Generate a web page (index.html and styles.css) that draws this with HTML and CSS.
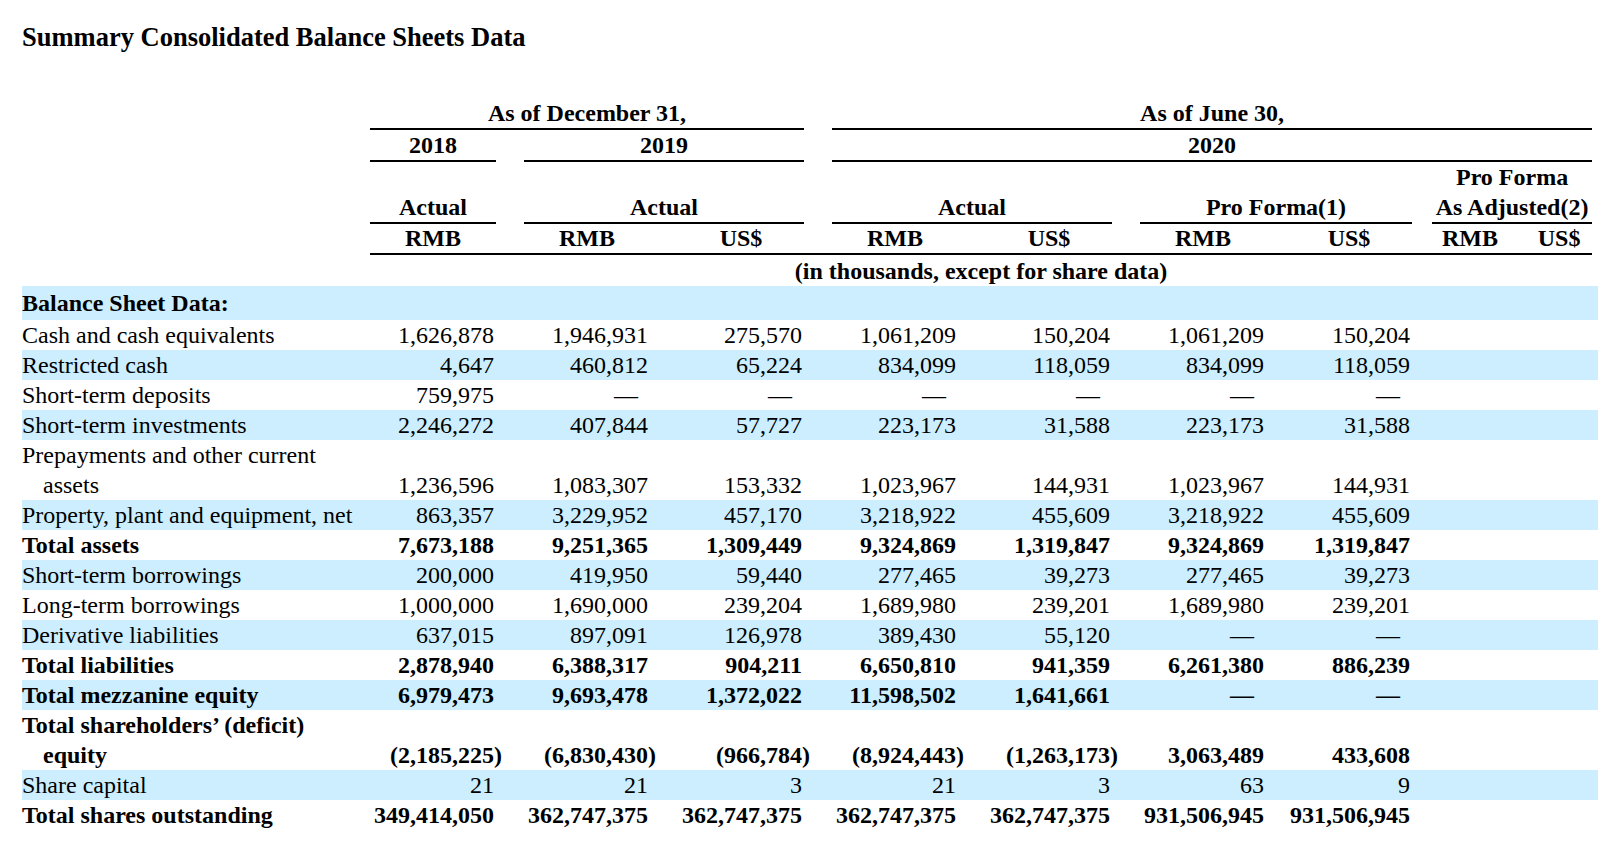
FILE: index.html
```html
<!DOCTYPE html>
<html lang="en">
<head>
<meta charset="utf-8">
<title>Summary Consolidated Balance Sheets Data</title>
<link rel="stylesheet" href="styles.css">
</head>
<body>
<h1 class="title">Summary Consolidated Balance Sheets Data</h1>
<table class="bs">
  <colgroup>
    <col class="w-lab"><col class="w-c1"><col class="w-c"><col class="w-c"><col class="w-c"><col class="w-c"><col class="w-c"><col class="w-c7"><col class="w-c8"><col class="w-c9"><col class="w-p">
  </colgroup>
  <thead>
    <tr>
      <td></td>
      <th colspan="3"><div class="ul">As of December 31,</div></th>
      <th colspan="6" class="g28"><div class="ul">As of June 30,</div></th>
      <td></td>
    </tr>
    <tr>
      <td></td>
      <th><div class="ul">2018</div></th>
      <th colspan="2" class="g28"><div class="ul">2019</div></th>
      <th colspan="6" class="g28"><div class="ul">2020</div></th>
      <td></td>
    </tr>
    <tr>
      <td></td>
      <td colspan="7"></td>
      <th colspan="2" class="g20">Pro Forma</th>
      <td></td>
    </tr>
    <tr>
      <td></td>
      <th><div class="ul">Actual</div></th>
      <th colspan="2" class="g28"><div class="ul">Actual</div></th>
      <th colspan="2" class="g28"><div class="ul">Actual</div></th>
      <th colspan="2" class="g28"><div class="ul">Pro Forma(1)</div></th>
      <th colspan="2" class="g20"><div class="ul">As Adjusted(2)</div></th>
      <td></td>
    </tr>
    <tr class="units">
      <td></td>
      <th class="unit">RMB</th>
      <th class="unit g28">RMB</th>
      <th class="unit g28">US$</th>
      <th class="unit g28">RMB</th>
      <th class="unit g28">US$</th>
      <th class="unit g28">RMB</th>
      <th class="unit g20">US$</th>
      <th class="unit g20">RMB</th>
      <th class="unit g18">US$</th>
      <td></td>
    </tr>
    <tr>
      <td></td>
      <th colspan="9" class="note">(in thousands, except for share data)</th>
      <td></td>
    </tr>
  </thead>
  <tbody>
    <tr class="alt sec">
      <td class="lab bold">Balance Sheet Data:</td>
      <td></td><td></td><td></td><td></td><td></td><td></td><td></td><td></td><td></td><td></td>
    </tr>
    <tr>
      <td class="lab">Cash and cash equivalents</td>
      <td>1,626,878</td><td>1,946,931</td><td>275,570</td><td>1,061,209</td><td>150,204</td><td>1,061,209</td><td>150,204</td><td></td><td></td><td></td>
    </tr>
    <tr class="alt">
      <td class="lab">Restricted cash</td>
      <td>4,647</td><td>460,812</td><td>65,224</td><td>834,099</td><td>118,059</td><td>834,099</td><td>118,059</td><td></td><td></td><td></td>
    </tr>
    <tr>
      <td class="lab">Short-term deposits</td>
      <td>759,975</td><td><span class="dash">—</span></td><td><span class="dash">—</span></td><td><span class="dash">—</span></td><td><span class="dash">—</span></td><td><span class="dash">—</span></td><td><span class="dash">—</span></td><td></td><td></td><td></td>
    </tr>
    <tr class="alt">
      <td class="lab">Short-term investments</td>
      <td>2,246,272</td><td>407,844</td><td>57,727</td><td>223,173</td><td>31,588</td><td>223,173</td><td>31,588</td><td></td><td></td><td></td>
    </tr>
    <tr>
      <td class="lab">Prepayments and other current assets</td>
      <td>1,236,596</td><td>1,083,307</td><td>153,332</td><td>1,023,967</td><td>144,931</td><td>1,023,967</td><td>144,931</td><td></td><td></td><td></td>
    </tr>
    <tr class="alt">
      <td class="lab">Property, plant and equipment, net</td>
      <td>863,357</td><td>3,229,952</td><td>457,170</td><td>3,218,922</td><td>455,609</td><td>3,218,922</td><td>455,609</td><td></td><td></td><td></td>
    </tr>
    <tr class="bold">
      <td class="lab">Total assets</td>
      <td>7,673,188</td><td>9,251,365</td><td>1,309,449</td><td>9,324,869</td><td>1,319,847</td><td>9,324,869</td><td>1,319,847</td><td></td><td></td><td></td>
    </tr>
    <tr class="alt">
      <td class="lab">Short-term borrowings</td>
      <td>200,000</td><td>419,950</td><td>59,440</td><td>277,465</td><td>39,273</td><td>277,465</td><td>39,273</td><td></td><td></td><td></td>
    </tr>
    <tr>
      <td class="lab">Long-term borrowings</td>
      <td>1,000,000</td><td>1,690,000</td><td>239,204</td><td>1,689,980</td><td>239,201</td><td>1,689,980</td><td>239,201</td><td></td><td></td><td></td>
    </tr>
    <tr class="alt">
      <td class="lab">Derivative liabilities</td>
      <td>637,015</td><td>897,091</td><td>126,978</td><td>389,430</td><td>55,120</td><td><span class="dash">—</span></td><td><span class="dash">—</span></td><td></td><td></td><td></td>
    </tr>
    <tr class="bold">
      <td class="lab">Total liabilities</td>
      <td>2,878,940</td><td>6,388,317</td><td>904,211</td><td>6,650,810</td><td>941,359</td><td>6,261,380</td><td>886,239</td><td></td><td></td><td></td>
    </tr>
    <tr class="alt bold">
      <td class="lab">Total mezzanine equity</td>
      <td>6,979,473</td><td>9,693,478</td><td>1,372,022</td><td>11,598,502</td><td>1,641,661</td><td><span class="dash">—</span></td><td><span class="dash">—</span></td><td></td><td></td><td></td>
    </tr>
    <tr class="bold">
      <td class="lab">Total shareholders’ (deficit) equity</td>
      <td>(2,185,225<span class="rp">)</span></td><td>(6,830,430<span class="rp">)</span></td><td>(966,784<span class="rp">)</span></td><td>(8,924,443<span class="rp">)</span></td><td>(1,263,173<span class="rp">)</span></td><td>3,063,489</td><td>433,608</td><td></td><td></td><td></td>
    </tr>
    <tr class="alt">
      <td class="lab">Share capital</td>
      <td>21</td><td>21</td><td>3</td><td>21</td><td>3</td><td>63</td><td>9</td><td></td><td></td><td></td>
    </tr>
    <tr class="bold">
      <td class="lab">Total shares outstanding</td>
      <td>349,414,050</td><td>362,747,375</td><td>362,747,375</td><td>362,747,375</td><td>362,747,375</td><td>931,506,945</td><td>931,506,945</td><td></td><td></td><td></td>
    </tr>
  </tbody>
</table>
</body>
</html>
```

FILE: styles.css
```css
html, body {
  background: #ffffff;
}

body {
  margin: 0;
  padding: 21px 0 0 22px;
  font-family: "Liberation Serif", "Times New Roman", serif;
  color: #000000;
}

.title {
  margin: 0;
  font-size: 26.5px;
  line-height: 32px;
  font-weight: bold;
}

.bs {
  margin-top: 45px;
  width: 1576px;
  table-layout: fixed;
  border-collapse: separate;
  border-spacing: 0;
  font-size: 24px;
}

.w-lab { width: 348px; }
.w-c1 { width: 126px; }
.w-c { width: 154px; }
.w-c7 { width: 146px; }
.w-c8 { width: 96px; }
.w-c9 { width: 84px; }
.w-p { width: 6px; }

.bs td,
.bs th {
  padding: 0;
  line-height: 30px;
  box-sizing: border-box;
}

.bs thead th {
  font-weight: bold;
  text-align: center;
  white-space: nowrap;
  vertical-align: bottom;
}

.bs thead td {
  vertical-align: bottom;
}

.ul {
  border-bottom: 2px solid #000000;
}

.g28 { padding-left: 28px !important; }
.g20 { padding-left: 20px !important; }
.g18 { padding-left: 18px !important; }

.bs thead th.unit {
  line-height: 29px;
  padding-bottom: 0;
  border-bottom: 2px solid #000000;
}

.bs thead th.note {
  padding-top: 1px;
}

.bs tbody td {
  text-align: right;
  padding-right: 2px;
  vertical-align: bottom;
  white-space: nowrap;
}

.bs tbody td.lab {
  text-align: left;
  padding-left: 21px;
  padding-right: 0;
  text-indent: -21px;
  white-space: normal;
}

.bs tbody tr.sec td {
  padding-top: 2px;
  padding-bottom: 2px;
}

.bs tbody tr.alt td {
  background: #cceeff;
}

.bold {
  font-weight: bold;
}

.dash {
  margin-right: 10px;
}

.rp {
  margin-right: -0.333em;
}
```
